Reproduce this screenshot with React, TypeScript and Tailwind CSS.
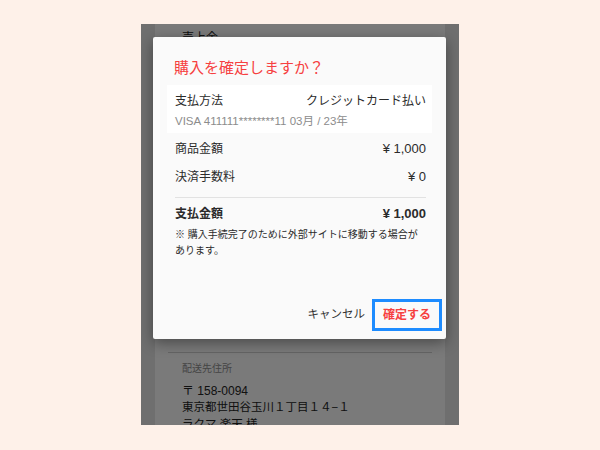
import React from 'react';

const font = { fontFamily: '"Liberation Sans", "Noto Sans CJK JP", sans-serif' };

const PriceRow = ({ label, value, bold }: { label: string, value: string, bold?: boolean }) => (
    <div className={`flex items-center justify-between pl-[8px] pr-[6px] text-[12px] leading-[16px] text-[#2b2b2b] ${bold ? 'font-bold' : ''}`}>
        <span>{label}</span>
        <span className="text-[13px]">{value}</span>
    </div>
);

const App: React.FC = () => {
    return (
        <div className="w-[600px] h-[450px] bg-[#fef1e9] flex justify-center pt-[24px]" style={font}>
            <div className="relative w-[318px] h-[401px] overflow-hidden bg-[#dedede]">
                {/* order summary page under the modal */}
                <div className="mx-[14px] h-full bg-[#f4f4f4] pt-[6px]">
                    <p className="ml-[27px] text-[12px] leading-[17px] text-[#222]">売上金</p>
                    <div className="h-[305px]"></div>
                    <div className="mx-[13px] border-t border-[#c8c8c8]"></div>
                    <div className="ml-[27px] pt-[9px] text-[#222]">
                        <p className="text-[10px] leading-[14px] text-[#8a8a8a]">配送先住所</p>
                        <p className="mt-[7px] text-[12px] leading-[16px]">〒 158-0094</p>
                        <p className="text-[11.5px] leading-[17px]">東京都世田谷玉川１丁目１４−１</p>
                        <p className="text-[11.5px] leading-[17px]">ラクマ 楽天 様</p>
                    </div>
                </div>

                <div className="absolute inset-0 bg-black/50"></div>

                {/* confirm dialog */}
                <div className="absolute left-[12px] top-[13px] w-[293px] h-[302px] bg-[#fafafa] rounded-[2px] shadow-[0_4px_14px_rgba(0,0,0,0.4)] px-[14px] pt-[21px] flex flex-col">
                    <h2 className="px-[7px] text-[15px] leading-[20px] text-[#f64040]">購入を確定しますか？</h2>
                    <div className="mt-[7px] bg-white pl-[8px] pr-[6px] pt-[7px] pb-[4px]">
                        <div className="flex items-center justify-between text-[12px] leading-[18px] text-[#2b2b2b]">
                            <span>支払方法</span>
                            <span>クレジットカード払い</span>
                        </div>
                        <p className="mt-[3px] text-[11.5px] leading-[16px] text-[#8c8c8c]">VISA 411111********11 03月 / 23年</p>
                    </div>
                    <div className="mt-[8px] flex flex-col gap-[12px]">
                        <PriceRow label="商品金額" value="¥ 1,000" />
                        <PriceRow label="決済手数料" value="¥ 0" />
                    </div>
                    <div className="ml-[8px] mr-[6px] mt-[12px] border-t border-[#e2e2e2]"></div>
                    <div className="mt-[8px]">
                        <PriceRow label="支払金額" value="¥ 1,000" bold />
                    </div>
                    <p className="mt-[5px] px-[8px] text-[10px] leading-[16px] text-[#2b2b2b]">
                        ※ 購入手続完了のために外部サイトに移動する場合があります。
                    </p>
                    <div className="mt-auto mb-[8px] flex items-center justify-end gap-[4px] -mr-[10px]">
                        <button className="h-[32px] px-[3px] text-[11.5px] text-[#333]">キャンセル</button>
                        <button className="h-[32px] w-[70px] border-[3px] border-[#1e8cff] text-[12px] font-bold text-[#f64040]">確定する</button>
                    </div>
                </div>
            </div>
        </div>
    );
};

export default App;
